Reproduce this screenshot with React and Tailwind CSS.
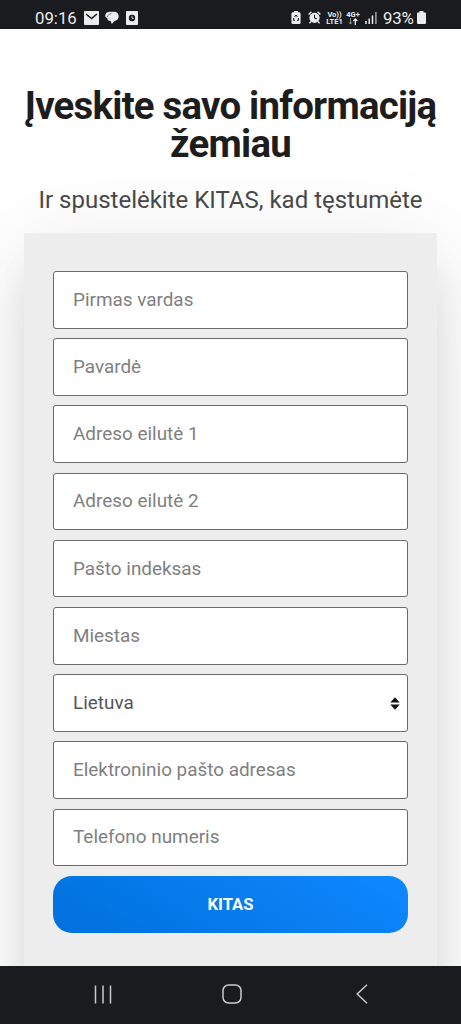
const fields = [
  { name: "firstName", label: "Pirmas vardas" },
  { name: "lastName", label: "Pavardė" },
  { name: "address1", label: "Adreso eilutė 1" },
  { name: "address2", label: "Adreso eilutė 2" },
  { name: "zip", label: "Pašto indeksas" },
  { name: "city", label: "Miestas" },
  { name: "country", label: "Lietuva", select: true },
  { name: "email", label: "Elektroninio pašto adresas" },
  { name: "phone", label: "Telefono numeris" },
];

function StatusBar() {
  return (
    <header className="flex h-[29px] shrink-0 items-center bg-[#191b1f] pt-[6px] pr-[35px] pl-[35px] text-[#ececec]">
      <span className="w-[43px] text-[16.8px] leading-5 whitespace-nowrap">09:16</span>
      <svg className="ml-[6px] h-[14px] w-[15px]" viewBox="0 0 15 14">
        <rect width="15" height="14" rx="1" fill="#ececec" />
        <path d="M2 3 7.5 7.5 13 3" fill="none" stroke="#191b1f" strokeWidth="1.6" />
      </svg>
      <svg className="ml-[6px] h-[14px] w-[14px]" viewBox="0 0 14 14">
        <path d="M5 .8h4c3 0 4.700 2 4.700 4.500S12 9.900 9.500 10.100L6.800 13 5.600 10C3.400 9.900 2.600 8.800 2.400 7.400L.5 6C-.5 3 1.500.8 5 .8Z" fill="#ececec" />
        <path d="M2.500 6C2.700 4 4 2.900 6.500 2.700" fill="none" stroke="#191b1f" strokeWidth=".5" />
      </svg>
      <svg className="ml-[7px] h-[14px] w-[12px]" viewBox="0 0 12 14">
        <rect width="12" height="14" rx="1" fill="#ececec" />
        <circle cx="6" cy="7" r="3.2" fill="#191b1f" />
        <path d="M6 5.2V7.3H7.6" fill="none" stroke="#ececec" strokeWidth=".9" />
      </svg>

      <svg className="ml-auto h-[13px] w-[10px]" viewBox="0 0 10 13">
        <path d="M3 0h4v1.3h1.4Q9.6 1.5 9.6 3v8.5Q9.6 13 8.2 13H1.8Q.4 13 .4 11.5V3Q.4 1.5 1.6 1.3H3Z" fill="#ececec" />
        <path d="M3.5 6 5 4l1.5 2M7.3 7l.5 2.2H6M4 9.2H2.2L2.8 7" fill="none" stroke="#191b1f" strokeWidth="1" />
      </svg>
      <svg className="ml-[7px] h-[13px] w-[13px]" viewBox="0 0 13 13">
        <circle cx="6.5" cy="6.8" r="5.1" fill="#ececec" />
        <path d="M.6 3.4 3.4.8M12.4 3.4 9.6.8M2.8 10.5l-1.3 1.8M10.2 10.5l1.3 1.8" stroke="#ececec" strokeWidth="1.4" />
        <path d="M6.5 3.8V7l2.3 1" fill="none" stroke="#191b1f" strokeWidth="1.1" />
      </svg>
      <span className="ml-[5px] w-[17px] text-center text-[7.5px] leading-[7px] font-bold whitespace-nowrap">
        Vo))
        <br />
        LTE1
      </span>
      <span className="ml-[3px] flex w-[14px] flex-col items-center text-[7.5px] leading-[7px] font-bold whitespace-nowrap">
        4G+
        <svg className="h-[7px] w-[10px]" viewBox="0 0 10 7">
          <path d="M2.5 0v6M.8 4.2l1.7 1.9 1.7-1.9" fill="none" stroke="#8d8f91" strokeWidth="1" />
          <path d="M7.3 7V1M5.3 3l2-2 2 2" fill="none" stroke="#ececec" strokeWidth="1.3" />
        </svg>
      </span>
      <svg className="ml-[5px] h-[12px] w-[12px]" viewBox="0 0 12 12">
        <path d="M1 9v3M4.2 6.5V12M7.5 3.5V12" stroke="#ececec" strokeWidth="1.5" />
        <path d="M10.9 0v12" stroke="#a0a2a4" strokeWidth="1.5" />
      </svg>
      <span className="ml-[6px] w-[33px] text-[16.8px] leading-5 tracking-[-0.2px] whitespace-nowrap">93%</span>
      <svg className="ml-[1px] h-[13px] w-[9px]" viewBox="0 0 9 13">
        <path d="M2.5 0h4v1.5H8q1 0 1 1V12q0 1-1 1H1q-1 0-1-1V2.500q0-1 1-1h1.500Z" fill="#ececec" />
      </svg>
    </header>
  );
}

function Field({ field }) {
  const box =
    "block h-[57.6px] w-full appearance-none rounded-[3px] border border-[#6a6a6a] bg-white px-[19px] text-[18.9px] outline-none";

  if (field.select) {
    return (
      <div className="relative">
        <select name={field.name} className={`${box} pt-px text-[#555]`}>
          <option>{field.label}</option>
        </select>
        <svg className="pointer-events-none absolute top-[23px] right-[8.5px] h-[13px] w-[10px]" viewBox="0 0 10 13">
          <path d="M5 .3 9.700 5.500H.3ZM5 12.700.3 7.500h9.400Z" fill="#111" />
        </svg>
      </div>
    );
  }

  return <input name={field.name} placeholder={field.label} className={`${box} pb-px placeholder:text-[#808080]`} />;
}

function NavBar() {
  return (
    <nav className="flex h-[58px] shrink-0 items-center bg-[#191b1f] pb-[2px] text-[#c9cacb]">
      <div className="flex w-[168px] justify-center pl-[38px]">
        <svg className="h-[19px] w-[18px]" viewBox="0 0 18 19" fill="none" stroke="currentColor" strokeWidth="1.5">
          <path d="M1.500 .5v18M9 .5v18M16.500 .5v18" />
        </svg>
      </div>
      <div className="flex w-[128px] justify-center">
        <svg className="h-[20px] w-[20px]" viewBox="0 0 20 20" fill="none" stroke="currentColor" strokeWidth="1.5">
          <rect x="1" y="1" width="18" height="18" rx="5.500" />
        </svg>
      </div>
      <div className="flex w-[131px] justify-center">
        <svg className="h-[20px] w-[12px]" viewBox="0 0 12 20" fill="none" stroke="currentColor" strokeWidth="1.5">
          <path d="M11 .8 1.200 10 11 19.200" />
        </svg>
      </div>
    </nav>
  );
}

export default function App() {
  return (
    <div className="flex h-[1024px] w-[461px] flex-col overflow-hidden bg-white font-[Roboto,sans-serif]">
      <StatusBar />

      <main className="min-h-0 flex-1 overflow-hidden px-[24px] pt-[58px]">
        <h1 className="-mx-4 text-center text-[38.4px] leading-[38.4px] font-bold tracking-[-0.77px] text-[#1d1d1d]">
          Įveskite savo informaciją
          <br />
          žemiau
        </h1>
        <p className="mt-[21px] text-center text-[24px] leading-[30px] whitespace-nowrap text-[#484848]">
          Ir spustelėkite KITAS, kad tęstumėte
        </p>

        <form className="mt-[18px] flex h-[830px] flex-col gap-[9.6px] bg-[#ededed] px-[29px] pt-[38.3px] shadow-[0_19px_96px_rgba(0,0,0,0.1),0_38px_38px_rgba(0,0,0,0.09)]">
          {fields.map((field) => (
            <Field key={field.name} field={field} />
          ))}
          <button
            type="button"
            className="h-[57.6px] shrink-0 rounded-[19px] bg-linear-[30deg] from-[#0070dc] to-[#0f88ff] pt-px text-[16.6px] font-bold text-white"
          >
            KITAS
          </button>
        </form>
      </main>

      <NavBar />
    </div>
  );
}
